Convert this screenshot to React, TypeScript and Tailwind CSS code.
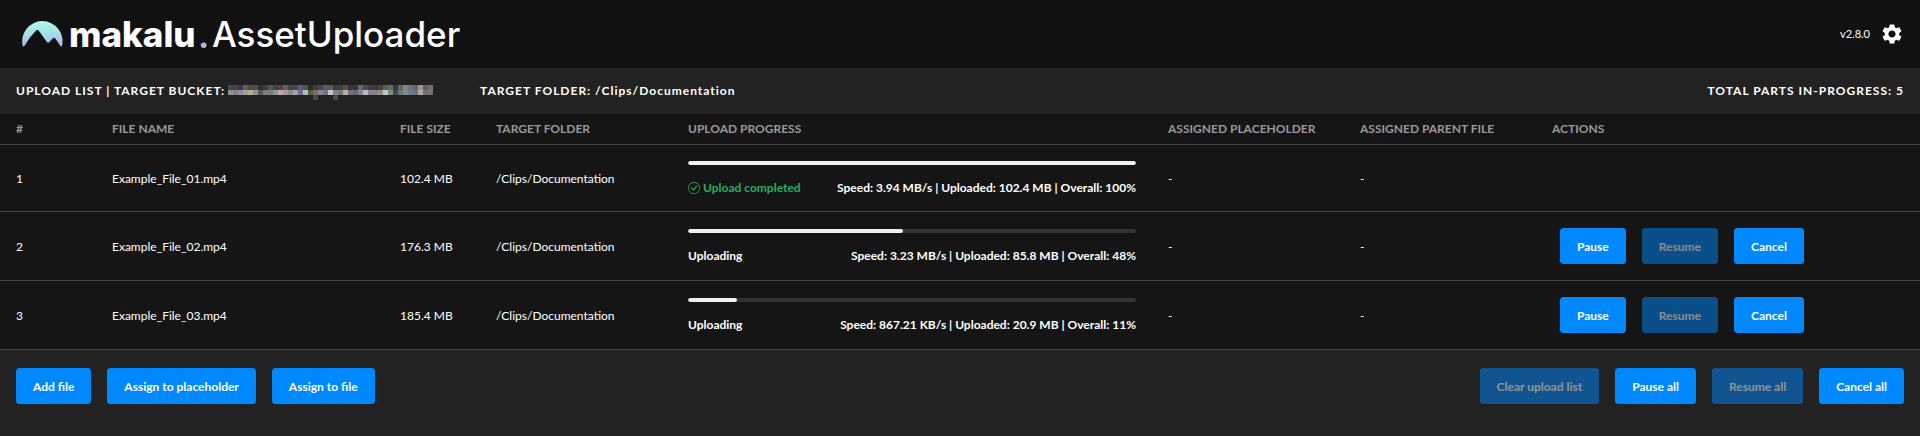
import React from 'react';
import { MdSettings } from 'react-icons/md';
import { BsCheckCircle } from 'react-icons/bs';

interface Upload {
    id: number;
    name: string;
    size: string;
    folder: string;
    speed: string;
    uploaded: string;
    percent: number;
}

const uploads: Upload[] = [
    { id: 1, name: 'Example_File_01.mp4', size: '102.4 MB', folder: '/Clips/Documentation', speed: '3.94 MB/s', uploaded: '102.4 MB', percent: 100 },
    { id: 2, name: 'Example_File_02.mp4', size: '176.3 MB', folder: '/Clips/Documentation', speed: '3.23 MB/s', uploaded: '85.8 MB', percent: 48 },
    { id: 3, name: 'Example_File_03.mp4', size: '185.4 MB', folder: '/Clips/Documentation', speed: '867.21 KB/s', uploaded: '20.9 MB', percent: 11 },
];

const columns = [
    { label: '#', width: 'w-[5%]' },
    { label: 'FILE NAME', width: 'w-[15%]' },
    { label: 'FILE SIZE', width: 'w-[5%]' },
    { label: 'TARGET FOLDER', width: 'w-[10%]' },
    { label: 'UPLOAD PROGRESS', width: 'w-[25%]' },
    { label: 'ASSIGNED PLACEHOLDER', width: 'w-[10%]' },
    { label: 'ASSIGNED PARENT FILE', width: 'w-[10%]' },
    { label: 'ACTIONS', width: 'w-[20%]' },
];

// Pixelated bucket name, one colour per 5px block
const maskTop = ['#42484c', '#44444a', '#3c3850', '#5e5e5c', '#4c4c44', '#4c504c', '#303234', '#3c3c40', '#545456', '#40444a', '#4a444c', '#6a5c60', '#444844', '#4a4844', '#5c5c70', '#4c5452', '#2c2c24', '#3c3c3e', '#46464a', '#5c5c70', '#5a5c5c', '#3c4044', '#404240', '#54524e', '#343640', '#34383c', '#666a66', '#4c4c4e', '#3c403e', '#3c3c3a', '#4a4240', '#5a605c', '#5c6c70', '#34383a', '#606864', '#888078', '#6c7480', '#6c6460', '#9c948c', '#5c6068', '#787068'];
const maskBottom = ['#8a9298', '#85807c', '#9888a8', '#94a4a0', '#b8a88c', '#8c9498', '#5a5a4c', '#7c7c80', '#748070', '#9090a0', '#c0a8a4', '#a89898', '#8c8c8c', '#b09ca0', '#706c98', '#a8c0bc', '#5c5a3c', '#74706c', '#8c8490', '#70748c', '#c0c4c4', '#8c7c8c', '#707878', '#b8b098', '#7c6c80', '#646870', '#84848c', '#b0c0c0', '#8c7c94', '#84887c', '#948c88', '#c0c8c4', '#848c70', '#44484c', '#6c7478', '#8c8884', '#6c7c94', '#74707c', '#b0a89c', '#64708c', '#7c7060'];

interface ButtonProps {
    disabled?: boolean;
    children: React.ReactNode;
}

const Button: React.FC<ButtonProps> = ({ disabled, children }) => (
    <button
        type="button"
        disabled={disabled}
        className="h-9 rounded-[3px] border border-[#0088ff] bg-[#0088ff] px-4 pt-0.5 font-bold text-white disabled:opacity-50"
    >
        {children}
    </button>
);

const Logo: React.FC = () => (
    <div className="flex items-center font-['Inter',sans-serif] text-[35px] text-white">
        <svg width="41" height="26" viewBox="0 0 41 26" aria-hidden="true">
            <defs>
                <linearGradient id="sky" x1="0" y1="0" x2="0" y2="1">
                    <stop offset="0" stopColor="#aaffe4" />
                    <stop offset="1" stopColor="#a3b8ee" />
                </linearGradient>
            </defs>
            <path fill="url(#sky)" d="M0.8 25.400A20.200 20.200 0 1 1 39.900 25.400Q39 26 38.300 24.800L33.500 17.800Q32 16 30.300 17.700L27.500 21Q26 22.500 24.700 20.700L17 10Q15.300 8 13.600 10L8 16.500L2.600 24.800Q1.600 26 0.800 25.400z" />
        </svg>
        <span className="ml-1.5 font-extrabold">makalu</span>
        <span className="ml-1 font-['Lato',sans-serif] font-black text-[#a3b8ee]">.</span>
        <span className="ml-1 font-medium">AssetUploader</span>
    </div>
);

const BucketMask: React.FC = () => (
    <svg className="mt-0.5" width="205" height="15" viewBox="0 0 205 15" shapeRendering="crispEdges" role="img" aria-label="Hidden bucket name">
        {maskTop.map((color, i) => <rect key={`t${i}`} x={i * 5} y="0" width="5" height="5" fill={color} />)}
        {maskBottom.map((color, i) => <rect key={`b${i}`} x={i * 5} y="5" width="5" height="5" fill={color} />)}
        <rect x="85" y="10" width="5" height="5" fill="#4a4a4c" />
        <rect x="105" y="10" width="5" height="5" fill="#4a4a4c" />
    </svg>
);

const Progress: React.FC<{ upload: Upload }> = ({ upload }) => (
    <div className="flex flex-col gap-[15px]">
        <div className="h-1 overflow-hidden rounded-xs bg-[#333333]">
            <div className="h-full rounded-xs bg-[#f0f0f0]" style={{ width: `${upload.percent}%` }} />
        </div>
        <div className="flex items-center justify-between font-bold">
            {upload.percent === 100 ? (
                <span className="flex items-center gap-[3px] text-[#27ae60]"><BsCheckCircle className="h-3 w-3" />Upload completed</span>
            ) : (
                <span>Uploading</span>
            )}
            <span>Speed: {upload.speed} | Uploaded: {upload.uploaded} | Overall: {upload.percent}%</span>
        </div>
    </div>
);

const App: React.FC = () => {
    return (
        <div className="min-h-screen bg-[#222222] font-['Lato',sans-serif] text-xs text-white">
            <header className="flex h-17 items-center justify-between bg-[#111111] pl-[22px] pr-4">
                <Logo />
                <div className="flex items-center gap-2.5">
                    <span className="text-[11px]">v2.8.0</span>
                    <button type="button" aria-label="Settings"><MdSettings className="h-6 w-6" /></button>
                </div>
            </header>
            <div className="flex h-[46px] items-center justify-between px-4 font-bold tracking-[1px]">
                <div className="flex items-center">
                    <span className="mr-[3px]">UPLOAD LIST | TARGET BUCKET:</span>
                    <BucketMask />
                    <span className="ml-[47px]">TARGET FOLDER: /Clips/Documentation</span>
                </div>
                <span>TOTAL PARTS IN-PROGRESS: 5</span>
            </div>
            <table className="w-full table-fixed border-separate border-spacing-0 bg-[#151515] text-left">
                <thead>
                    <tr className="h-[31px] text-[#999999]">
                        {columns.map(({ label, width }) => (
                            <th key={label} className={`${width} border-b border-[#444444] px-4 font-bold`}>{label}</th>
                        ))}
                    </tr>
                </thead>
                <tbody className="[&_td]:border-b [&_td]:border-[#444444]">
                    {uploads.map(upload => (
                        <tr key={upload.id}>
                            <td className="px-4 pt-0.5">{upload.id}</td>
                            <td className="px-4 pt-0.5">{upload.name}</td>
                            <td className="pl-4 pt-0.5 whitespace-nowrap">{upload.size}</td>
                            <td className="px-4 pt-0.5">{upload.folder}</td>
                            <td className="px-4 pt-4 pb-[15px]"><Progress upload={upload} /></td>
                            <td className="px-4 pt-0.5">-</td>
                            <td className="px-4 pt-0.5">-</td>
                            <td className="px-6">
                                {upload.percent < 100 && (
                                    <div className="flex gap-4 py-4">
                                        <Button>Pause</Button>
                                        <Button disabled>Resume</Button>
                                        <Button>Cancel</Button>
                                    </div>
                                )}
                            </td>
                        </tr>
                    ))}
                </tbody>
            </table>
            <footer className="flex justify-between px-4 py-[18px]">
                <div className="flex gap-4">
                    <Button>Add file</Button>
                    <Button>Assign to placeholder</Button>
                    <Button>Assign to file</Button>
                </div>
                <div className="flex gap-4">
                    <Button disabled>Clear upload list</Button>
                    <Button>Pause all</Button>
                    <Button disabled>Resume all</Button>
                    <Button>Cancel all</Button>
                </div>
            </footer>
        </div>
    );
};

export default App;
